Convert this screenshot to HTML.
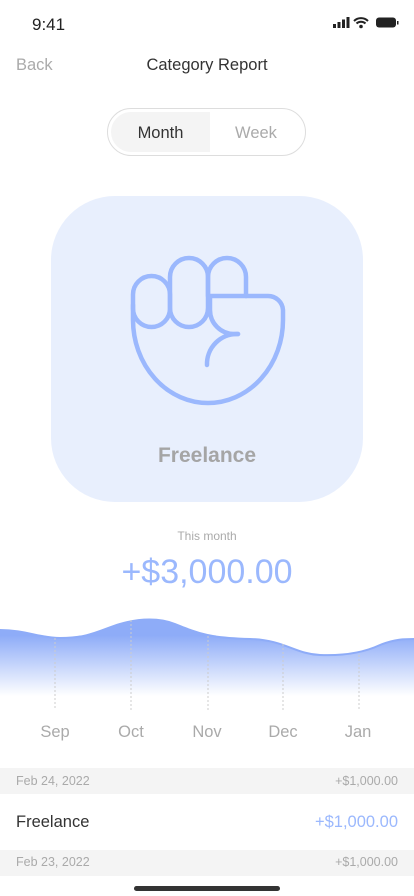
<!DOCTYPE html>
<html><head><meta charset="utf-8"><style>
*{margin:0;padding:0;box-sizing:border-box}
body{width:414px;height:896px;background:#fff;font-family:"Liberation Sans",sans-serif;position:relative;overflow:hidden}
.a{position:absolute}
</style></head><body>
<div class="a" style="left:32px;top:15px;font-size:17px;color:#222">9:41</div>
<svg class="a" style="left:330px;top:14px" width="70" height="16" viewBox="0 0 70 16">
<rect x="3" y="10" width="3" height="4" fill="#222"/><rect x="7.5" y="8" width="3" height="6" fill="#222"/><rect x="12" y="5.5" width="3" height="8.5" fill="#222"/><rect x="16.5" y="3" width="3" height="11" fill="#222"/>
<path d="M24 7 A10 10 0 0 1 38 7 M26.5 9.5 A6.5 6.5 0 0 1 35.5 9.5" stroke="#222" stroke-width="2" fill="none"/><circle cx="31" cy="12.5" r="1.8" fill="#222"/>
<rect x="46" y="3.5" width="20" height="10" rx="3" fill="#222"/><rect x="67" y="7" width="1.5" height="3.5" fill="#222"/>
</svg>
<div class="a" style="left:16px;top:56px;font-size:16.5px;color:#aaa">Back</div>
<div class="a" style="left:0;width:414px;text-align:center;top:56px;font-size:16.5px;color:#333">Category Report</div>
<div class="a" style="left:107px;top:108px;width:199px;height:48px;border:1px solid #ddd;border-radius:24px"></div>
<div class="a" style="left:111px;top:112px;width:99px;height:40px;background:#f4f4f4;border-radius:20px 0 0 20px;text-align:center;line-height:42px;font-size:16.5px;color:#333">Month</div>
<div class="a" style="left:210px;top:112px;width:92px;height:40px;text-align:center;line-height:42px;font-size:16.5px;color:#aaa">Week</div>
<div class="a" style="left:51px;top:196px;width:312px;height:306px;background:#e8effd;border-radius:64px"></div>
<svg class="a" style="left:0;top:0" width="414" height="500">
<g stroke="#9bb8fd" stroke-width="4.5" fill="none" stroke-linecap="round" stroke-linejoin="round">
<rect x="133" y="276" width="37" height="51" rx="18.5"/>
<rect x="170" y="258" width="38" height="69" rx="19"/>
<path d="M208 296 V277 A19 19 0 0 1 246 277 V296"/>
<path d="M133 305 V320 A75 83 0 0 0 283 320 V310 A15 15 0 0 0 268 296 H210 V310 A24 24 0 0 0 234 334 H238"/>
<path d="M238 334 A30 30 0 0 0 207 365"/>
</g></svg>
<div class="a" style="left:51px;width:312px;text-align:center;top:444px;font-size:21px;font-weight:bold;color:#a5a5a5">Freelance</div>
<div class="a" style="left:0;width:414px;text-align:center;top:529px;font-size:12px;color:#aaa">This month</div>
<div class="a" style="left:0;width:414px;text-align:center;top:553px;font-size:34px;color:#9bb8fd">+$3,000.00</div>
<svg class="a" style="left:0;top:600px" width="414" height="110">
<defs><linearGradient id="g" x1="0" y1="0" x2="0" y2="1"><stop offset="0.2" stop-color="#8eacf8"/><stop offset="0.95" stop-color="#fff"/></linearGradient></defs>
<path d="M0 30 C25 30 40 38 60 38 C90 38 100 30 120 24 C140 18 160 18 175 24 C200 34 210 38 250 39 C285 40 295 54 320 55 C345 56 365 52 380 45 C395 39 405 39 414 39 V100 H0Z" fill="url(#g)"/>
<path d="M0 30 C25 30 40 38 60 38 C90 38 100 30 120 24 C140 18 160 18 175 24 C200 34 210 38 250 39 C285 40 295 54 320 55 C345 56 365 52 380 45 C395 39 405 39 414 39" stroke="#8eacf8" stroke-width="2" fill="none"/>
<g stroke="#ccc" stroke-dasharray="2 2"><line x1="55" y1="38" x2="55" y2="116"/><line x1="131" y1="20" x2="131" y2="116"/><line x1="208" y1="36" x2="208" y2="116"/><line x1="283" y1="44" x2="283" y2="116"/><line x1="359" y1="55" x2="359" y2="116"/></g>
</svg>
<div class="a" style="top:723px;left:25px;width:60px;text-align:center;font-size:16.5px;color:#aaa">Sep</div>
<div class="a" style="top:723px;left:101px;width:60px;text-align:center;font-size:16.5px;color:#aaa">Oct</div>
<div class="a" style="top:723px;left:177px;width:60px;text-align:center;font-size:16.5px;color:#aaa">Nov</div>
<div class="a" style="top:723px;left:253px;width:60px;text-align:center;font-size:16.5px;color:#aaa">Dec</div>
<div class="a" style="top:723px;left:328px;width:60px;text-align:center;font-size:16.5px;color:#aaa">Jan</div>
<div class="a" style="top:768px;left:0;width:414px;height:26px;background:#f4f4f4"></div>
<div class="a" style="top:774px;left:16px;font-size:12.5px;color:#aaa">Feb 24, 2022</div>
<div class="a" style="top:774px;right:16px;font-size:12.5px;color:#aaa">+$1,000.00</div>
<div class="a" style="top:813px;left:16px;font-size:16.5px;color:#333">Freelance</div>
<div class="a" style="top:813px;right:16px;font-size:16.5px;color:#9bb8fd">+$1,000.00</div>
<div class="a" style="top:850px;left:0;width:414px;height:26px;background:#f4f4f4"></div>
<div class="a" style="top:855px;left:16px;font-size:12.5px;color:#aaa">Feb 23, 2022</div>
<div class="a" style="top:855px;right:16px;font-size:12.5px;color:#aaa">+$1,000.00</div>
<div class="a" style="top:886px;left:134px;width:146px;height:5px;border-radius:3px;background:#333"></div>
</body></html>
